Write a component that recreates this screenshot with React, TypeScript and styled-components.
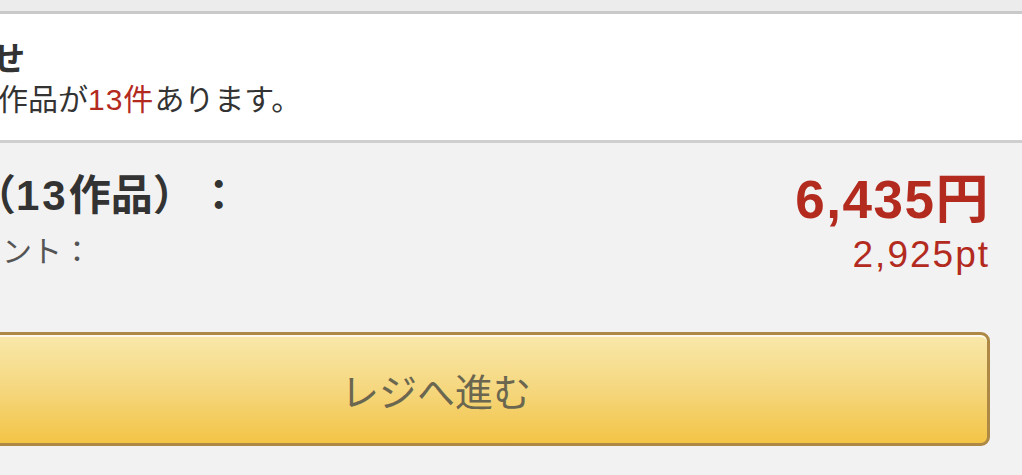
import React from "react";
import styled, { createGlobalStyle } from "styled-components";

const GlobalStyle = createGlobalStyle`
  html, body {
    margin: 0;
    padding: 0;
    background: #f2f2f2;
  }
  body {
    font-family: "Liberation Sans", "Noto Sans CJK JP", sans-serif;
    color: #333;
  }
`;

const Page = styled.div`
  width: 1022px;
  height: 475px;
  overflow: hidden;
  background: #f2f2f2;
`;

const TopStrip = styled.div`
  height: 11px;
  background: #ececec;
`;

const Notice = styled.section`
  margin-left: -110px;
  height: 132px;
  padding-top: 25px;
  box-sizing: border-box;
  background: #fff;
  border-top: 3px solid #c9c9c9;
  border-bottom: 3px solid #cfcfcf;
`;

const NoticeTitle = styled.h2`
  margin: 0 0 1px;
  font-size: 34px;
  line-height: 40px;
  font-weight: 700;
  color: #333;
`;

const NoticeText = styled.p`
  margin: 0;
  padding-left: 18px;
  font-size: 30px;
  line-height: 40px;
  color: #333;
`;

const Accent = styled.span`
  color: #b32a1f;
  letter-spacing: 1px;
`;

const Summary = styled.section`
  margin-left: -118px;
  padding: 29px 32px 0 0;
`;

const TotalsRow = styled.div`
  display: flex;
  justify-content: space-between;
  align-items: flex-start;
`;

const LabelColumn = styled.div`
  display: flex;
  flex-direction: column;
`;

const TotalLabel = styled.div`
  padding-left: 8px;
  font-size: 42px;
  line-height: 48px;
  font-weight: 700;
  color: #333;
`;

const Count = styled.span`
  letter-spacing: 3px;
`;

const Colon = styled.span`
  margin-left: 24px;
`;

const PointLabel = styled.div`
  margin: 14px 0 0 0;
  font-size: 30px;
  line-height: 36px;
  color: #555;
`;

const PriceColumn = styled.div`
  display: flex;
  flex-direction: column;
  align-items: flex-end;
`;

const Price = styled.div`
  font-size: 53px;
  line-height: 56px;
  font-weight: 700;
  letter-spacing: 1.5px;
  color: #b32a1f;
`;

const Points = styled.div`
  margin-top: 7px;
  font-size: 37px;
  line-height: 40px;
  letter-spacing: 2px;
  color: #b32a1f;
`;

const CheckoutButton = styled.button`
  display: block;
  width: 100%;
  height: 114px;
  margin-top: 57px;
  padding: 0;
  border: 3px solid #ad8945;
  border-radius: 9px;
  background: linear-gradient(#f9e8ab 0%, #f5d77e 50%, #f3c446 100%);
  box-shadow: inset 0 2px 0 rgba(255, 255, 255, 0.75);
  font-family: "Liberation Sans", "Noto Sans CJK JP", sans-serif;
  font-size: 38px;
  color: #6b6650;
  cursor: pointer;
`;

export default function App() {
  return (
    <Page>
      <GlobalStyle />
      <TopStrip />
      <Notice>
        <NoticeTitle>お知らせ</NoticeTitle>
        <NoticeText>
          対象の作品が<Accent>13件</Accent>あります。
        </NoticeText>
      </Notice>
      <Summary>
        <TotalsRow>
          <LabelColumn>
            <TotalLabel>
              合計（<Count>13</Count>作品）<Colon>：</Colon>
            </TotalLabel>
            <PointLabel>獲得ポイント：</PointLabel>
          </LabelColumn>
          <PriceColumn>
            <Price>6,435円</Price>
            <Points>2,925pt</Points>
          </PriceColumn>
        </TotalsRow>
        <CheckoutButton>レジへ進む</CheckoutButton>
      </Summary>
    </Page>
  );
}
